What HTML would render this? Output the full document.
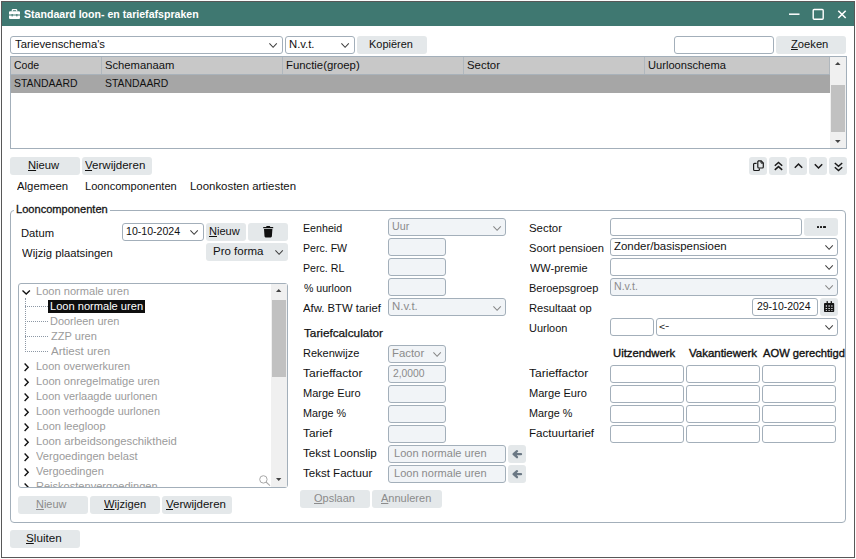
<!DOCTYPE html>
<html><head><meta charset="utf-8"><title>Standaard loon- en tariefafspraken</title><style>
html,body{margin:0;padding:0;}
body{width:856px;height:559px;position:relative;overflow:hidden;background:#fcfcfc;font-family:"Liberation Sans",sans-serif;font-size:11px;color:#111;}
.a{position:absolute;box-sizing:border-box;white-space:nowrap;}
.win{left:1px;top:1px;width:854px;height:557px;border:1px solid #585858;background:#fff;}
.title{left:2px;top:2px;width:852px;height:24px;background:#3f7871;}
.t{position:absolute;white-space:nowrap;height:14px;line-height:14px;transform-origin:0 0;}
.in{border:1px solid #a3afba;border-radius:3px;background:#fff;}
.dis{background:#f1f4f7;}
.btn{background:#e4e8ea;border-radius:3px;}
u{text-decoration:underline;text-decoration-thickness:1px;text-underline-offset:1px;}
.th{background:#c8c8c8;border-right:1px solid #b0b7bd;}
svg{position:absolute;overflow:visible;}
</style></head><body>
<div class="a win"></div>
<div class="a title"></div>
<svg style="left:8.7px;top:9px" width="11" height="10" viewBox="0 0 11 10"><path d="M3.3 2.4 V1.3 Q3.3 0.6 4 0.6 H7 Q7.7 0.6 7.7 1.3 V2.4" fill="none" stroke="#fff" stroke-width="1.2"/><path d="M1 2.2 H10 Q11 2.2 11 3.2 V5.6 H0 V3.2 Q0 2.2 1 2.2 Z M0 6.4 H11 V9 Q11 10 10 10 H1 Q0 10 0 9 Z" fill="#fff"/><rect x="2.6" y="5" width="1.1" height="2.4" fill="#3f7871"/><rect x="7.3" y="5" width="1.1" height="2.4" fill="#3f7871"/></svg>
<div class="t" style="left:24.30px;top:7.00px;transform:scaleX(0.9619);color:#fff;font-weight:bold;">Standaard loon- en tariefafspraken</div>
<svg style="left:788px;top:8px" width="60" height="14"><path d="M1 6.2 H11.5" stroke="#fff" stroke-width="1.5"/><rect x="25.2" y="1.5" width="10" height="9.8" rx="1" fill="none" stroke="#fff" stroke-width="1.4"/><path d="M50.3 2.7 L57.7 10 M57.7 2.7 L50.3 10" stroke="#fff" stroke-width="1.6"/></svg>
<div class="a in" style="left:10px;top:36px;width:273px;height:18px;"></div>
<div class="t" style="left:14.50px;top:37.00px;transform:scaleX(1.0259);">Tarievenschema's</div>
<svg style="left:269.4px;top:43.2px" width="8.2" height="5.3"><path d="M0.4 0.4 L4.1 4.3 L7.799999999999999 0.4" fill="none" stroke="#3d3d3d" stroke-width="1.02"/></svg>
<div class="a in" style="left:285px;top:36px;width:70px;height:18px;"></div>
<div class="t" style="left:289.37px;top:37.00px;transform:scaleX(1.0261);">N.v.t.</div>
<svg style="left:341.4px;top:43.2px" width="8.2" height="5.3"><path d="M0.4 0.4 L4.1 4.3 L7.799999999999999 0.4" fill="none" stroke="#3d3d3d" stroke-width="1.02"/></svg>
<div class="a btn" style="left:357px;top:36px;width:70px;height:18px;"></div>
<div class="t" style="left:368.90px;top:37.00px;transform:scaleX(0.9965);">Kopiëren</div>
<div class="a in" style="left:674px;top:36px;width:100px;height:18px;"></div>
<div class="a btn" style="left:776px;top:36px;width:70px;height:18px;"></div>
<div class="t" style="left:791.40px;top:37.00px;transform:scaleX(1.0167);"><u>Z</u>oeken</div>
<div class="a " style="left:10px;top:56px;width:837px;height:93px;background:#fff;border:1px solid #a3afba;"></div>
<div class="a th" style="left:11px;top:57px;width:91px;height:17px;"></div>
<div class="a th" style="left:102px;top:57px;width:181px;height:17px;"></div>
<div class="a th" style="left:283px;top:57px;width:181px;height:17px;"></div>
<div class="a th" style="left:464px;top:57px;width:181px;height:17px;"></div>
<div class="a th" style="left:645px;top:57px;width:185px;height:17px;"></div>
<div class="t" style="left:14.45px;top:58.00px;transform:scaleX(0.9540);">Code</div>
<div class="t" style="left:105.13px;top:58.00px;transform:scaleX(1.0205);">Schemanaam</div>
<div class="t" style="left:285.87px;top:58.00px;transform:scaleX(1.0300);">Functie(groep)</div>
<div class="t" style="left:467.11px;top:58.00px;transform:scaleX(1.0355);">Sector</div>
<div class="t" style="left:647.89px;top:58.00px;transform:scaleX(1.0112);">Uurloonschema</div>
<div class="a " style="left:11px;top:74px;width:819px;height:19px;background:#a6a6a6;border-top:1px solid #a9b2ba;"></div>
<div class="t" style="left:14.45px;top:76.00px;transform:scaleX(0.9485);">STANDAARD</div>
<div class="t" style="left:105.21px;top:76.00px;transform:scaleX(0.9447);">STANDAARD</div>
<div class="a " style="left:830px;top:57px;width:16px;height:91px;background:#f0f0f0;"></div>
<div class="a " style="left:831px;top:85px;width:14px;height:47px;background:#c1c1c1;"></div>
<svg style="left:834.7px;top:62px" width="6" height="4"><path d="M0 3 L2.8 0 L5.6 3 Z" fill="#444"/></svg>
<svg style="left:834.7px;top:140px" width="6" height="4"><path d="M0 0 L2.8 3 L5.6 0 Z" fill="#444"/></svg>
<div class="a btn" style="left:10px;top:157px;width:70px;height:18px;"></div>
<div class="t" style="left:28.13px;top:158.00px;transform:scaleX(1.0200);"><u>N</u>ieuw</div>
<div class="a btn" style="left:82px;top:157px;width:70px;height:18px;"></div>
<div class="t" style="left:85.20px;top:158.00px;transform:scaleX(1.0491);"><u>V</u>erwijderen</div>
<div class="a btn" style="left:749px;top:157px;width:18px;height:18px;"></div>
<div class="a btn" style="left:769px;top:157px;width:18px;height:18px;"></div>
<div class="a btn" style="left:789px;top:157px;width:18px;height:18px;"></div>
<div class="a btn" style="left:809px;top:157px;width:18px;height:18px;"></div>
<div class="a btn" style="left:829px;top:157px;width:18px;height:18px;"></div>
<svg style="left:753px;top:160px" width="12" height="12" fill="none" stroke="#1a1a1a" stroke-width="1.2"><path d="M3.6 3.3 H1.6 Q0.6 3.3 0.6 4.3 V9.5 Q0.6 10.5 1.6 10.5 H5.4 Q6.4 10.5 6.4 9.5 V8.4"/><path d="M5 0.8 H8.2 L10.3 2.9 V7 Q10.3 8 9.3 8 H5.8 Q4.8 8 4.8 7 V1.8 Q4.8 0.8 5.8 0.8 Z" fill="#e4e8ea"/><path d="M8 0.9 V3.1 H10.2" stroke-width="1"/></svg>
<svg style="left:773.5px;top:159.5px" width="10" height="12" fill="none" stroke="#1a1a1a" stroke-width="1.5"><path d="M0.8 5.7 L4.5 2.4 L8.2 5.7 M0.8 9.9 L4.5 6.6 L8.2 9.9"/></svg>
<svg style="left:793.5px;top:159.5px" width="10" height="12" fill="none" stroke="#1a1a1a" stroke-width="1.5"><path d="M0.8 7.8 L4.5 4 L8.2 7.8"/></svg>
<svg style="left:813.5px;top:159.5px" width="10" height="12" fill="none" stroke="#1a1a1a" stroke-width="1.5"><path d="M0.8 4.2 L4.5 8 L8.2 4.2"/></svg>
<svg style="left:833.5px;top:159.5px" width="10" height="12" fill="none" stroke="#1a1a1a" stroke-width="1.5"><path d="M0.8 3 L4.5 6.3 L8.2 3 M0.8 7.2 L4.5 10.5 L8.2 7.2"/></svg>
<div class="t" style="left:17.00px;top:179.00px;transform:scaleX(1.0306);">Algemeen</div>
<div class="t" style="left:85.39px;top:179.00px;transform:scaleX(1.0067);">Looncomponenten</div>
<div class="t" style="left:190.36px;top:179.00px;transform:scaleX(1.0381);">Loonkosten artiesten</div>
<div class="a " style="left:10px;top:210px;width:836px;height:313px;border:1px solid #a3afba;border-radius:4px;"></div>
<div class="a " style="left:14px;top:205px;width:96px;height:8px;background:#fff;"></div>
<div class="t" style="left:16.39px;top:202.00px;transform:scaleX(1.0067);-webkit-text-stroke:0.3px #1a1a1a;">Looncomponenten</div>
<div class="t" style="left:21.13px;top:226.00px;transform:scaleX(1.0194);">Datum</div>
<div class="a in" style="left:122px;top:223px;width:82px;height:18px;"></div>
<div class="t" style="left:126.19px;top:224.00px;transform:scaleX(0.9609);">10-10-2024</div>
<svg style="left:190.4px;top:230.2px" width="8.2" height="5.3"><path d="M0.4 0.4 L4.1 4.3 L7.799999999999999 0.4" fill="none" stroke="#3d3d3d" stroke-width="1.02"/></svg>
<div class="a btn" style="left:206px;top:223px;width:40px;height:18px;"></div>
<div class="t" style="left:209.40px;top:224.00px;transform:scaleX(1.0033);"><u>N</u>ieuw</div>
<div class="a btn" style="left:248px;top:223px;width:40px;height:18px;"></div>
<svg style="left:263.2px;top:225.7px" width="10.4" height="11.4" viewBox="0 0 10.4 11.4"><path d="M3.6 0 H6.8 L7.3 0.9 H10.2 V2.2 H0.2 V0.9 H3.1 Z M1 3 H9.4 L8.9 10.3 Q8.8 11.4 7.8 11.4 H2.6 Q1.6 11.4 1.5 10.3 Z" fill="#111"/></svg>
<div class="t" style="left:21.65px;top:246.00px;transform:scaleX(1.0239);">Wijzig plaatsingen</div>
<div class="a btn" style="left:206px;top:243px;width:82px;height:18px;"></div>
<div class="t" style="left:212.86px;top:244.00px;transform:scaleX(1.0447);">Pro forma</div>
<svg style="left:274.9px;top:249.8px" width="8.2" height="5.3"><path d="M0.4 0.4 L4.1 4.3 L7.799999999999999 0.4" fill="none" stroke="#3d3d3d" stroke-width="1.02"/></svg>
<div class="a " style="left:18px;top:283px;width:270px;height:205px;border:1px solid #a3afba;border-radius:3px;background:#fff;"></div>
<div class="a" style="left:19px;top:284px;width:252px;height:203px;overflow:hidden;">
<svg style="left:3.1000000000000014px;top:6.300000000000011px" width="9" height="5" fill="none" stroke="#111" stroke-width="1.35"><path d="M0.5 0.6 L4.2 4 L7.9 0.6"/></svg>
<div class="t" style="left:17.39px;top:0.00px;transform:scaleX(1.0077);color:#9b9b9b;">Loon normale uren</div>
<div class="a " style="left:29px;top:16px;width:96.5px;height:13px;background:#0e0e0e;"></div>
<div class="t" style="left:31.39px;top:15.00px;transform:scaleX(1.0077);color:#fff;">Loon normale uren</div>
<div class="t" style="left:31.40px;top:30.00px;transform:scaleX(0.9956);color:#9b9b9b;">Doorleen uren</div>
<div class="t" style="left:31.90px;top:45.00px;transform:scaleX(1.0044);color:#9b9b9b;">ZZP uren</div>
<div class="t" style="left:31.50px;top:60.00px;transform:scaleX(1.0500);color:#9b9b9b;">Artiest uren</div>
<svg style="left:5px;top:79.30000000000001px" width="5" height="9" fill="none" stroke="#111" stroke-width="1.4"><path d="M0.6 0.5 L4.2 4.2 L0.6 7.9"/></svg>
<div class="t" style="left:17.40px;top:75.00px;transform:scaleX(0.9989);color:#9b9b9b;">Loon overwerkuren</div>
<svg style="left:5px;top:94.30000000000001px" width="5" height="9" fill="none" stroke="#111" stroke-width="1.4"><path d="M0.6 0.5 L4.2 4.2 L0.6 7.9"/></svg>
<div class="t" style="left:17.39px;top:90.00px;transform:scaleX(1.0116);color:#9b9b9b;">Loon onregelmatige uren</div>
<svg style="left:5px;top:109.30000000000001px" width="5" height="9" fill="none" stroke="#111" stroke-width="1.4"><path d="M0.6 0.5 L4.2 4.2 L0.6 7.9"/></svg>
<div class="t" style="left:17.40px;top:105.00px;transform:scaleX(0.9967);color:#9b9b9b;">Loon verlaagde uurlonen</div>
<svg style="left:5px;top:124.30000000000001px" width="5" height="9" fill="none" stroke="#111" stroke-width="1.4"><path d="M0.6 0.5 L4.2 4.2 L0.6 7.9"/></svg>
<div class="t" style="left:17.41px;top:120.00px;transform:scaleX(0.9887);color:#9b9b9b;">Loon verhoogde uurlonen</div>
<svg style="left:5px;top:139.3px" width="5" height="9" fill="none" stroke="#111" stroke-width="1.4"><path d="M0.6 0.5 L4.2 4.2 L0.6 7.9"/></svg>
<div class="t" style="left:17.40px;top:135.00px;transform:scaleX(1.0000);color:#9b9b9b;">Loon leegloop</div>
<svg style="left:5px;top:154.3px" width="5" height="9" fill="none" stroke="#111" stroke-width="1.4"><path d="M0.6 0.5 L4.2 4.2 L0.6 7.9"/></svg>
<div class="t" style="left:17.37px;top:150.00px;transform:scaleX(1.0274);color:#9b9b9b;">Loon arbeidsongeschiktheid</div>
<svg style="left:5px;top:169.3px" width="5" height="9" fill="none" stroke="#111" stroke-width="1.4"><path d="M0.6 0.5 L4.2 4.2 L0.6 7.9"/></svg>
<div class="t" style="left:17.20px;top:165.00px;transform:scaleX(1.0130);color:#9b9b9b;">Vergoedingen belast</div>
<svg style="left:5px;top:184.3px" width="5" height="9" fill="none" stroke="#111" stroke-width="1.4"><path d="M0.6 0.5 L4.2 4.2 L0.6 7.9"/></svg>
<div class="t" style="left:17.20px;top:180.00px;transform:scaleX(0.9985);color:#9b9b9b;">Vergoedingen</div>
<svg style="left:5px;top:199.3px" width="5" height="9" fill="none" stroke="#111" stroke-width="1.4"><path d="M0.6 0.5 L4.2 4.2 L0.6 7.9"/></svg>
<div class="t" style="left:17.40px;top:195.00px;transform:scaleX(1.0042);color:#9b9b9b;">Reiskostenvergoedingen</div>
<div class="a" style="left:5.5px;top:14px;width:0;height:54px;border-left:1px dotted #8d98a5;"></div>
<div class="a" style="left:6px;top:22px;width:23px;height:0;border-top:1px dotted #8d98a5;"></div>
<div class="a" style="left:6px;top:37px;width:23px;height:0;border-top:1px dotted #8d98a5;"></div>
<div class="a" style="left:6px;top:52px;width:23px;height:0;border-top:1px dotted #8d98a5;"></div>
<div class="a" style="left:6px;top:67px;width:23px;height:0;border-top:1px dotted #8d98a5;"></div>
</div>
<div class="a " style="left:271px;top:284px;width:16px;height:203px;background:#f0f0f0;"></div>
<div class="a " style="left:272px;top:300px;width:14px;height:77px;background:#c1c1c1;"></div>
<svg style="left:275.8px;top:288.9px" width="6" height="4"><path d="M0 3.1 L2.7 0 L5.4 3.1 Z" fill="#444"/></svg>
<svg style="left:275.8px;top:478px" width="6" height="4"><path d="M0 0 L2.7 3.1 L5.4 0 Z" fill="#444"/></svg>
<svg style="left:258.5px;top:475px" width="12" height="11" fill="none" stroke="#a8a8a8"><circle cx="4.4" cy="4.4" r="3.7" stroke-width="1"/><path d="M7 7 L11 10.6" stroke-width="1.05"/></svg>
<div class="a btn" style="left:18px;top:496px;width:70px;height:18px;"></div>
<div class="t" style="left:36.41px;top:497.00px;transform:scaleX(0.9933);color:#8b8b8b;"><u>N</u>ieuw</div>
<div class="a btn" style="left:90px;top:496px;width:70px;height:18px;"></div>
<div class="t" style="left:103.90px;top:497.00px;transform:scaleX(1.0122);"><u>W</u>ijzigen</div>
<div class="a btn" style="left:162px;top:496px;width:70px;height:18px;"></div>
<div class="t" style="left:166.00px;top:497.00px;transform:scaleX(1.0421);"><u>V</u>erwijderen</div>
<div class="t" style="left:303.23px;top:221.00px;transform:scaleX(0.9692);">Eenheid</div>
<div class="t" style="left:303.24px;top:241.00px;transform:scaleX(0.9622);">Perc. FW</div>
<div class="t" style="left:303.23px;top:261.00px;transform:scaleX(0.9655);">Perc. RL</div>
<div class="t" style="left:304.20px;top:281.00px;transform:scaleX(0.9612);">% uurloon</div>
<div class="t" style="left:303.30px;top:301.00px;transform:scaleX(1.0276);">Afw. BTW tarief</div>
<div class="t" style="left:303.20px;top:346.00px;transform:scaleX(1.0018);">Rekenwijze</div>
<div class="t" style="left:303.30px;top:366.00px;transform:scaleX(1.0963);">Tarieffactor</div>
<div class="t" style="left:303.20px;top:386.00px;transform:scaleX(1.0018);">Marge Euro</div>
<div class="t" style="left:303.22px;top:406.00px;transform:scaleX(0.9791);">Marge %</div>
<div class="t" style="left:303.30px;top:426.00px;transform:scaleX(1.0778);">Tarief</div>
<div class="t" style="left:303.30px;top:446.00px;transform:scaleX(1.0594);">Tekst Loonslip</div>
<div class="t" style="left:303.30px;top:466.00px;transform:scaleX(1.0485);">Tekst Factuur</div>
<div class="t" style="left:303.50px;top:326.00px;transform:scaleX(1.0676);-webkit-text-stroke:0.25px #111;">Tariefcalculator</div>
<div class="a in dis" style="left:388px;top:218px;width:118px;height:18px;"></div>
<div class="t" style="left:392.13px;top:219.00px;transform:scaleX(0.9706);color:#8b8b8b;">Uur</div>
<svg style="left:492.7px;top:225.5px" width="8.2" height="5.3"><path d="M0.4 0.4 L4.1 4.3 L7.799999999999999 0.4" fill="none" stroke="#858585" stroke-width="1.02"/></svg>
<div class="a in dis" style="left:388px;top:238px;width:58px;height:18px;"></div>
<div class="a in dis" style="left:388px;top:258px;width:58px;height:18px;"></div>
<div class="a in dis" style="left:388px;top:278px;width:58px;height:18px;"></div>
<div class="a in dis" style="left:388px;top:298px;width:118px;height:18px;"></div>
<div class="t" style="left:392.07px;top:299.00px;transform:scaleX(1.0348);color:#8b8b8b;">N.v.t.</div>
<svg style="left:492.7px;top:305.5px" width="8.2" height="5.3"><path d="M0.4 0.4 L4.1 4.3 L7.799999999999999 0.4" fill="none" stroke="#858585" stroke-width="1.02"/></svg>
<div class="a in dis" style="left:388px;top:345px;width:58px;height:18px;"></div>
<div class="t" style="left:392.17px;top:346.00px;transform:scaleX(1.0333);color:#8b8b8b;">Factor</div>
<svg style="left:432.7px;top:352.4px" width="8.2" height="5.3"><path d="M0.4 0.4 L4.1 4.3 L7.799999999999999 0.4" fill="none" stroke="#858585" stroke-width="1.02"/></svg>
<div class="a in dis" style="left:388px;top:365px;width:58px;height:18px;"></div>
<div class="t" style="left:393.20px;top:366.00px;transform:scaleX(0.9394);color:#8b8b8b;">2,0000</div>
<div class="a in dis" style="left:388px;top:385px;width:58px;height:18px;"></div>
<div class="a in dis" style="left:388px;top:405px;width:58px;height:18px;"></div>
<div class="a in dis" style="left:388px;top:425px;width:58px;height:18px;"></div>
<div class="a in dis" style="left:388px;top:445px;width:118px;height:18px;"></div>
<div class="t" style="left:393.90px;top:446.00px;transform:scaleX(1.0033);color:#8b8b8b;">Loon normale uren</div>
<div class="a in dis" style="left:388px;top:465px;width:118px;height:18px;"></div>
<div class="t" style="left:393.90px;top:466.00px;transform:scaleX(1.0033);color:#8b8b8b;">Loon normale uren</div>
<div class="a btn" style="left:508px;top:445px;width:18px;height:18px;"></div>
<svg style="left:512.3px;top:449.6px" width="10.2" height="8.4" fill="none" stroke="#6c7985" stroke-width="2.3" stroke-linecap="round" stroke-linejoin="round"><path d="M9 4.2 H1.8 M5 1.2 L1.6 4.2 L5 7.2"/><path d="M1.2 4.2 L4.6 1.6 V6.8 Z" fill="#6c7985" stroke="none"/></svg>
<div class="a btn" style="left:508px;top:465px;width:18px;height:18px;"></div>
<svg style="left:512.3px;top:469.6px" width="10.2" height="8.4" fill="none" stroke="#6c7985" stroke-width="2.3" stroke-linecap="round" stroke-linejoin="round"><path d="M9 4.2 H1.8 M5 1.2 L1.6 4.2 L5 7.2"/><path d="M1.2 4.2 L4.6 1.6 V6.8 Z" fill="#6c7985" stroke="none"/></svg>
<div class="a btn" style="left:300px;top:490px;width:70px;height:18px;"></div>
<div class="t" style="left:314.30px;top:491.00px;transform:scaleX(0.9975);color:#8b8b8b;"><u>O</u>pslaan</div>
<div class="a btn" style="left:372px;top:490px;width:70px;height:18px;"></div>
<div class="t" style="left:381.40px;top:491.00px;transform:scaleX(1.0020);color:#8b8b8b;"><u>A</u>nnuleren</div>
<div class="t" style="left:529.16px;top:221.00px;transform:scaleX(1.0387);">Sector</div>
<div class="t" style="left:529.19px;top:241.00px;transform:scaleX(1.0137);">Soort pensioen</div>
<div class="t" style="left:529.70px;top:261.00px;transform:scaleX(0.9966);">WW-premie</div>
<div class="t" style="left:529.20px;top:281.00px;transform:scaleX(1.0029);">Beroepsgroep</div>
<div class="t" style="left:529.19px;top:301.00px;transform:scaleX(1.0148);">Resultaat op</div>
<div class="t" style="left:529.21px;top:321.00px;transform:scaleX(0.9946);">Uurloon</div>
<div class="t" style="left:529.30px;top:366.00px;transform:scaleX(1.0944);">Tarieffactor</div>
<div class="t" style="left:529.19px;top:386.00px;transform:scaleX(1.0054);">Marge Euro</div>
<div class="t" style="left:529.22px;top:406.00px;transform:scaleX(0.9837);">Marge %</div>
<div class="t" style="left:529.15px;top:426.00px;transform:scaleX(1.0541);">Factuurtarief</div>
<div class="a in" style="left:610px;top:218px;width:192px;height:18px;"></div>
<div class="a btn" style="left:804px;top:218px;width:34px;height:18px;"></div>
<div class="a " style="left:817px;top:225.8px;width:2.2px;height:2.2px;background:#1a1a1a;border-radius:0.5px;"></div>
<div class="a " style="left:820.2px;top:225.8px;width:2.2px;height:2.2px;background:#1a1a1a;border-radius:0.5px;"></div>
<div class="a " style="left:823.4px;top:225.8px;width:2.2px;height:2.2px;background:#1a1a1a;border-radius:0.5px;"></div>
<div class="a in" style="left:610px;top:238px;width:228px;height:18px;"></div>
<div class="t" style="left:614.10px;top:239.00px;transform:scaleX(1.0407);">Zonder/basispensioen</div>
<svg style="left:824.6px;top:245.2px" width="8.2" height="5.3"><path d="M0.4 0.4 L4.1 4.3 L7.799999999999999 0.4" fill="none" stroke="#3d3d3d" stroke-width="1.02"/></svg>
<div class="a in" style="left:610px;top:258px;width:228px;height:18px;"></div>
<svg style="left:824.6px;top:265.2px" width="8.2" height="5.3"><path d="M0.4 0.4 L4.1 4.3 L7.799999999999999 0.4" fill="none" stroke="#3d3d3d" stroke-width="1.02"/></svg>
<div class="a in dis" style="left:610px;top:278px;width:228px;height:18px;"></div>
<div class="t" style="left:613.64px;top:280.00px;transform:scaleX(1.0571);color:#8b8b8b;font-size:10px;">N.v.t.</div>
<svg style="left:824.6px;top:285.2px" width="8.2" height="5.3"><path d="M0.4 0.4 L4.1 4.3 L7.799999999999999 0.4" fill="none" stroke="#858585" stroke-width="1.02"/></svg>
<div class="a in" style="left:752px;top:298px;width:66px;height:18px;"></div>
<div class="t" style="left:756.90px;top:299.00px;transform:scaleX(0.9500);">29-10-2024</div>
<div class="a btn" style="left:820px;top:298px;width:18px;height:18px;"></div>
<div class="a in" style="left:610px;top:318px;width:44px;height:18px;"></div>
<div class="a in" style="left:656px;top:318px;width:182px;height:18px;"></div>
<div class="t" style="left:659.12px;top:320.00px;transform:scaleX(1.1750);font-size:9px;">&lt;</div>
<div class="t" style="left:664.85px;top:319.00px;transform:scaleX(1.4500);font-size:9px;">-</div>
<svg style="left:824.6px;top:325.2px" width="8.2" height="5.3"><path d="M0.4 0.4 L4.1 4.3 L7.799999999999999 0.4" fill="none" stroke="#3d3d3d" stroke-width="1.02"/></svg>
<svg style="left:824.1px;top:301px" width="10.2" height="11" viewBox="0 0 10.2 11"><path d="M0.8 1.9 H9.4 Q10.2 1.9 10.2 2.7 V10.2 Q10.2 11 9.4 11 H0.8 Q0 11 0 10.2 V2.7 Q0 1.9 0.8 1.9 Z" fill="#161616"/><rect x="2.6" y="0" width="1.3" height="2.6" rx="0.6" fill="#161616"/><rect x="6.7" y="0" width="1.3" height="2.6" rx="0.6" fill="#161616"/><g fill="#c4c9cd"><rect x="1.8" y="4.2" width="1.2" height="1.6"/><rect x="4.5" y="4.2" width="1.3" height="1.6"/><rect x="7.3" y="4.2" width="1.2" height="1.6"/></g><g fill="#eceff1"><rect x="1.6" y="7" width="1.5" height="0.9"/><rect x="4.4" y="7" width="1.5" height="0.9"/><rect x="7.2" y="7" width="1.4" height="0.9"/><rect x="1.8" y="9.2" width="1.2" height="0.8"/><rect x="4.5" y="9.2" width="1.3" height="0.8"/><rect x="7.3" y="9.2" width="1.2" height="0.8"/></g></svg>
<div class="t" style="left:613.37px;top:346.00px;transform:scaleX(1.0254);-webkit-text-stroke:0.35px #111;">Uitzendwerk</div>
<div class="t" style="left:689.00px;top:346.00px;transform:scaleX(1.0415);-webkit-text-stroke:0.35px #111;">Vakantiewerk</div>
<div class="t" style="left:763.40px;top:346.00px;transform:scaleX(1.0163);-webkit-text-stroke:0.35px #111;">AOW gerechtigd</div>
<div class="a " style="left:845px;top:345px;width:1px;height:20px;background:#a3afba;"></div>
<div class="a in" style="left:610px;top:365px;width:74px;height:18px;"></div>
<div class="a in" style="left:686px;top:365px;width:74px;height:18px;"></div>
<div class="a in" style="left:762px;top:365px;width:74px;height:18px;"></div>
<div class="a in" style="left:610px;top:385px;width:74px;height:18px;"></div>
<div class="a in" style="left:686px;top:385px;width:74px;height:18px;"></div>
<div class="a in" style="left:762px;top:385px;width:74px;height:18px;"></div>
<div class="a in" style="left:610px;top:405px;width:74px;height:18px;"></div>
<div class="a in" style="left:686px;top:405px;width:74px;height:18px;"></div>
<div class="a in" style="left:762px;top:405px;width:74px;height:18px;"></div>
<div class="a in" style="left:610px;top:425px;width:74px;height:18px;"></div>
<div class="a in" style="left:686px;top:425px;width:74px;height:18px;"></div>
<div class="a in" style="left:762px;top:425px;width:74px;height:18px;"></div>
<div class="a btn" style="left:10px;top:530px;width:70px;height:18px;"></div>
<div class="t" style="left:26.44px;top:531.00px;transform:scaleX(1.0625);"><u>S</u>luiten</div>
</body></html>
